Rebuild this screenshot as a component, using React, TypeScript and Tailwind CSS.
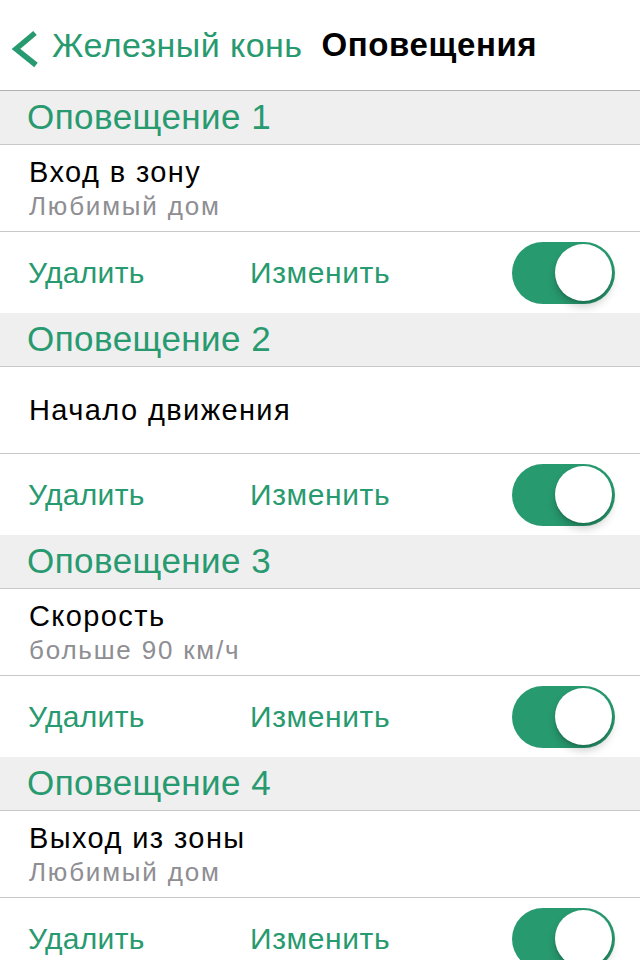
import React from 'react';

const GREEN = '#289a6f';

interface AlertItem {
  title: string;
  subtitle?: string;
}

const alerts: AlertItem[] = [
  { title: 'Вход в зону', subtitle: 'Любимый дом' },
  { title: 'Начало движения' },
  { title: 'Скорость', subtitle: 'больше 90 км/ч' },
  { title: 'Выход из зоны', subtitle: 'Любимый дом' },
];

const Toggle: React.FC = () => (
  <div className="relative h-[62px] w-[103px] rounded-full bg-[#289a6f]">
    <div className="absolute right-[3px] top-[2.5px] h-[57px] w-[57px] rounded-full bg-white shadow-[0_6px_8px_rgba(0,0,0,0.18),0_2px_2px_rgba(0,0,0,0.12)]"></div>
  </div>
);

export default function App() {
  return (
    <div
      className="h-[960px] w-[640px] overflow-hidden bg-white"
      style={{ fontFamily: '"Liberation Sans", Arial, sans-serif' }}
    >
      {/* nav bar */}
      <div className="flex h-[91px] items-center border-b border-[#b2b2b2] pl-[10px]">
        <svg width="30" height="42" viewBox="0 0 30 42" className="mt-[6px] shrink-0">
          <polyline
            points="25,6 6,22 26,38"
            fill="none"
            stroke={GREEN}
            strokeWidth="5.5"
            strokeLinejoin="miter"
          />
        </svg>
        <span className="ml-[12px] text-[34px] tracking-[0.45px] text-[#289a6f]">Железный конь</span>
        <span className="ml-[19px] text-[33px] font-bold tracking-[0.6px] text-black">Оповещения</span>
      </div>

      {alerts.map((a, i) => (
        <div key={i}>
          <div className="flex h-[54px] items-center border-b border-[#c8c8c8] bg-[#efefef] pl-[27px]">
            <span className="text-[35px] tracking-[0.45px] text-[#289a6f]">Оповещение {i + 1}</span>
          </div>
          <div className="flex h-[87px] flex-col justify-center border-b border-[#c8c8c8] pl-[29px]">
            <span className="text-[29px] leading-[33px] tracking-[1.4px] text-black">{a.title}</span>
            {a.subtitle && (
              <span className="mt-[2px] text-[26px] leading-[30px] tracking-[1.8px] text-[#8e8e93]">{a.subtitle}</span>
            )}
          </div>
          <div className="flex h-[81px] items-center pl-[28px] pr-[25px]">
            <span className="w-[222px] text-[30px] tracking-[0.3px] text-[#289a6f]">Удалить</span>
            <span className="text-[30px] tracking-[0.6px] text-[#289a6f]">Изменить</span>
            <div className="ml-auto">
              <Toggle />
            </div>
          </div>
        </div>
      ))}
    </div>
  );
}
